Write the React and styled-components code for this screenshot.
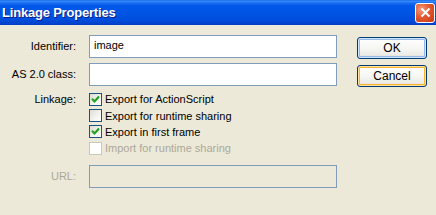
import React from "react";
import styled, { createGlobalStyle } from "styled-components";

const GlobalStyle = createGlobalStyle`
  html, body {
    margin: 0;
    padding: 0;
    background: #ece9d8;
  }
  body {
    font-family: "Liberation Sans", Arial, sans-serif;
    font-size: 11px;
  }
`;

const Window = styled.div`
  width: 436px;
  height: 215px;
  background: #ece9d8;
  overflow: hidden;
`;

const TitleBar = styled.div`
  height: 25px;
  display: flex;
  align-items: center;
  justify-content: space-between;
  padding: 0 1px 0 2px;
  box-sizing: border-box;
  background: linear-gradient(
    to bottom,
    #0a5deb 0px,
    #3d8ff7 1px,
    #1a6cf2 3px,
    #0058e8 6px,
    #0054e3 14px,
    #004ddc 20px,
    #0041cc 24px,
    #003bbf 25px
  );
`;

const Title = styled.span`
  font-family: "Liberation Sans", Arial, sans-serif;
  font-weight: bold;
  font-size: 13px;
  letter-spacing: -0.2px;
  color: #ffffff;
  text-shadow: 1px 1px 0 #0a1e8c;
`;

const CloseButton = styled.div`
  width: 20px;
  height: 20px;
  box-sizing: border-box;
  border: 1px solid #ffffff;
  border-radius: 3px;
  background: radial-gradient(circle at 30% 30%, #f39c80 0%, #e2582f 45%, #c63b14 100%);
  display: flex;
  align-items: center;
  justify-content: center;
  margin-top: 0px;
`;

const Body = styled.div`
  display: flex;
  align-items: flex-start;
  padding-top: 10px;
`;

const Form = styled.div`
  display: grid;
  grid-template-columns: 76px 248px;
  column-gap: 13px;
  row-gap: 5px;
`;

const Label = styled.div`
  text-align: right;
  color: ${(p) => (p.$disabled ? "#aca899" : "#000000")};
  height: ${(p) => (p.$h ? p.$h : 23)}px;
  line-height: ${(p) => (p.$h ? p.$h : 23)}px;
  white-space: nowrap;
`;

const TextField = styled.div`
  height: 23px;
  box-sizing: border-box;
  border: 1px solid #7f9db9;
  background: ${(p) => (p.$disabled ? "#ece9d8" : "#ffffff")};
  padding: 0 4px;
  line-height: 19px;
  font-size: 11px;
  color: #000;
`;

const CheckList = styled.div`
  display: flex;
  flex-direction: column;
  margin-bottom: 3px;
`;

const CheckRow = styled.div`
  height: 16.4px;
  display: flex;
  align-items: center;
  gap: 3px;
  color: ${(p) => (p.$disabled ? "#aca899" : "#000000")};
  white-space: nowrap;
`;

const Box = styled.div`
  width: 13px;
  height: 13px;
  box-sizing: border-box;
  border: 1px solid ${(p) => (p.$disabled ? "#cac8bb" : "#1c5180")};
  background: ${(p) =>
    p.$disabled
      ? "#ffffff"
      : "linear-gradient(135deg, #dcdcd7 0%, #f4f4f0 60%, #ffffff 100%)"};
  display: flex;
  align-items: center;
  justify-content: center;
`;

const Buttons = styled.div`
  display: flex;
  flex-direction: column;
  gap: 6px;
  margin-left: 20px;
  margin-top: 2px;
`;

const Button = styled.div`
  width: 70px;
  height: 22px;
  box-sizing: border-box;
  border: 1px solid #003c74;
  border-radius: 3px;
  background: linear-gradient(to bottom, #ffffff 0%, #f6f6f3 50%, #ecebe6 85%, #d6d0c5 100%);
  box-shadow: ${(p) =>
    p.$variant === "default"
      ? "inset 0 0 0 1px #cee7ff, inset 0 0 0 2px #98b8ea"
      : p.$variant === "hover"
      ? "inset 0 0 0 1px #ffe0a0, inset 0 0 0 2px #f8b330"
      : "none"};
  display: flex;
  align-items: center;
  justify-content: center;
  color: #000;
  font-size: 12px;
`;

function Check({ checked, disabled }) {
  return (
    <Box $disabled={disabled}>
      {checked && (
        <svg width="9" height="9" viewBox="0 0 9 9">
          <path d="M1 3.8 L3.5 6.5 L8 1.6" fill="none" stroke="#21a121" strokeWidth="2.2" />
        </svg>
      )}
    </Box>
  );
}

export default function App() {
  return (
    <Window>
      <GlobalStyle />
      <TitleBar>
        <Title>Linkage Properties</Title>
        <CloseButton>
          <svg width="11" height="11" viewBox="0 0 11 11">
            <path d="M1.5 1.5 L9.5 9.5 M9.5 1.5 L1.5 9.5" stroke="#ffffff" strokeWidth="2" />
          </svg>
        </CloseButton>
      </TitleBar>
      <Body>
        <Form>
          <Label>Identifier:</Label>
          <TextField>image</TextField>
          <Label>AS 2.0 class:</Label>
          <TextField />
          <Label $h={17}>Linkage:</Label>
          <CheckList>
            <CheckRow>
              <Check checked />
              Export for ActionScript
            </CheckRow>
            <CheckRow>
              <Check />
              Export for runtime sharing
            </CheckRow>
            <CheckRow>
              <Check checked />
              Export in first frame
            </CheckRow>
            <CheckRow $disabled>
              <Check disabled />
              Import for runtime sharing
            </CheckRow>
          </CheckList>
          <Label $disabled>URL:</Label>
          <TextField $disabled />
        </Form>
        <Buttons>
          <Button $variant="default">OK</Button>
          <Button $variant="hover">Cancel</Button>
        </Buttons>
      </Body>
    </Window>
  );
}
